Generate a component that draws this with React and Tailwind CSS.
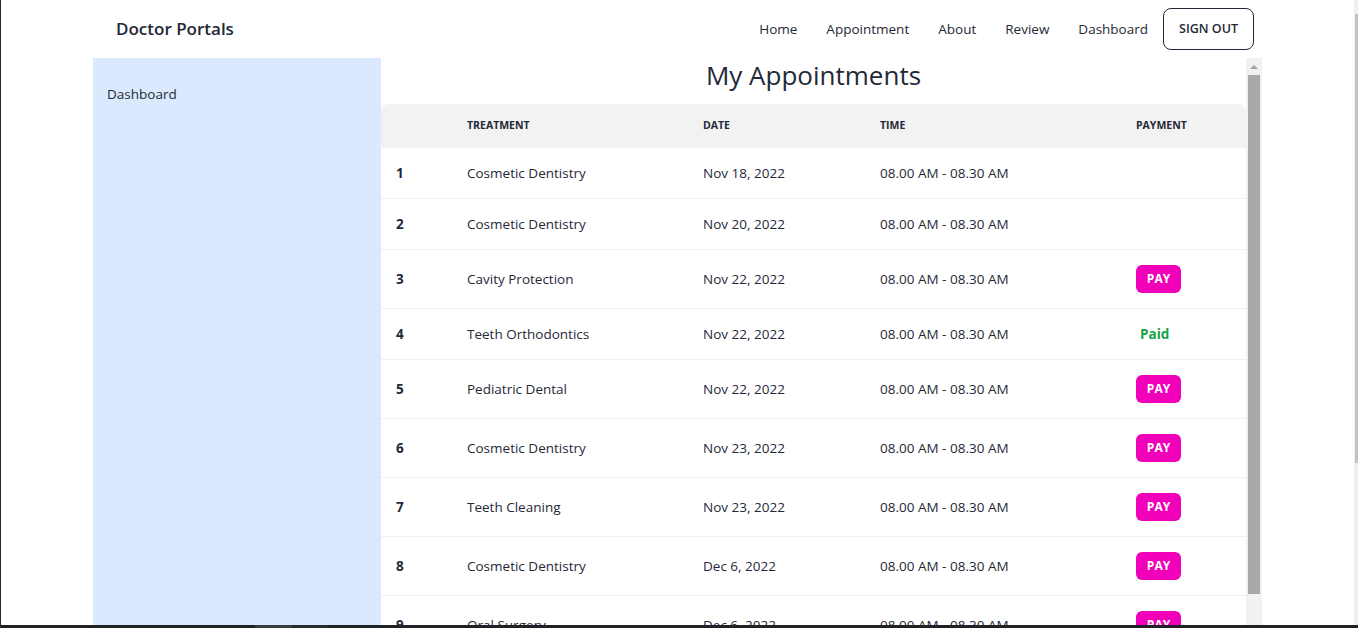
const rows = [
  { id: 1, treatment: 'Cosmetic Dentistry', date: 'Nov 18, 2022', pay: null },
  { id: 2, treatment: 'Cosmetic Dentistry', date: 'Nov 20, 2022', pay: null },
  { id: 3, treatment: 'Cavity Protection', date: 'Nov 22, 2022', pay: 'pay' },
  { id: 4, treatment: 'Teeth Orthodontics', date: 'Nov 22, 2022', pay: 'paid' },
  { id: 5, treatment: 'Pediatric Dental', date: 'Nov 22, 2022', pay: 'pay' },
  { id: 6, treatment: 'Cosmetic Dentistry', date: 'Nov 23, 2022', pay: 'pay' },
  { id: 7, treatment: 'Teeth Cleaning', date: 'Nov 23, 2022', pay: 'pay' },
  { id: 8, treatment: 'Cosmetic Dentistry', date: 'Dec 6, 2022', pay: 'pay' },
  { id: 9, treatment: 'Oral Surgery', date: 'Dec 6, 2022', pay: 'pay' },
];

const navLinks = ['Home', 'Appointment', 'About', 'Review', 'Dashboard'];

function Row({ row }) {
  const tall = row.pay === 'pay';
  return (
    <div
      className={`flex items-center border-b border-[#f0f0f0] text-[13.5px] text-[#1f2937] ${
        tall ? 'h-[59px]' : 'h-[51px]'
      }`}
    >
      <div className="w-[70px] pl-[15px] font-bold">{row.id}</div>
      <div className="w-[236px] pl-[16px]">{row.treatment}</div>
      <div className="w-[177px] pl-[16px]">{row.date}</div>
      <div className="w-[256px] pl-[16px]">08.00 AM - 08.30 AM</div>
      <div className="flex-1 pl-[16px]">
        {row.pay === 'pay' && (
          <button className="h-[28px] w-[45px] rounded-[6px] bg-[#f000b8] text-[12px] font-bold text-white">
            PAY
          </button>
        )}
        {row.pay === 'paid' && (
          <span className="pl-[4px] font-bold text-[#16a34a]">Paid</span>
        )}
      </div>
    </div>
  );
}

export default function App() {
  return (
    <div
      className="flex h-[628px] w-[1358px] flex-col overflow-hidden border-l border-[#2b2b2b] bg-white"
      style={{ fontFamily: '"Open Sans", "Noto Sans", sans-serif' }}
    >
      <div className="flex min-h-0 flex-1">
        <div className="min-w-0 flex-1">
          <div className="mx-auto flex h-full w-[1169px] flex-col">
            {/* navbar */}
            <div className="flex h-[58px] shrink-0 items-center justify-between px-2">
              <div className="pl-[15px] text-[17px] font-semibold text-[#1f2937]">Doctor Portals</div>
              <div className="flex items-center">
                {navLinks.map(l => (
                  <a key={l} className="px-[14.5px] text-[13.5px] text-[#1f2937]">
                    {l}
                  </a>
                ))}
                <button className="ml-[0.5px] h-[42px] rounded-[8px] border border-[#1f2937] px-[15px] text-[12.5px] font-semibold text-[#1f2937]">
                  SIGN OUT
                </button>
              </div>
            </div>

            <div className="flex min-h-0 flex-1">
              {/* sidebar */}
              <div className="w-[288px] shrink-0 bg-[#dbe9fe] px-[14px] pt-[26px]">
                <p className="text-[13.5px] text-[#1f2937]">Dashboard</p>
              </div>

              {/* content */}
              <div className="flex min-w-0 flex-1">
                <div className="w-[865px] overflow-hidden">
                  <h2 className="h-[46px] text-center text-[26px] leading-[34px] text-[#1f2937]">
                    My Appointments
                  </h2>
                  <div className="flex h-[44px] items-center rounded-t-[8px] bg-[#f2f2f2] text-[10.5px] font-bold uppercase text-[#1f2937]">
                    <div className="w-[70px] pl-[15px]"></div>
                    <div className="w-[236px] pl-[16px]">Treatment</div>
                    <div className="w-[177px] pl-[16px]">Date</div>
                    <div className="w-[256px] pl-[16px]">Time</div>
                    <div className="flex-1 pl-[16px]">Payment</div>
                  </div>
                  {rows.map(r => (
                    <Row key={r.id} row={r} />
                  ))}
                </div>
                {/* inner scrollbar */}
                <div className="flex w-[16px] flex-col bg-[#f1f1f1]">
                  <div className="flex h-[17px] items-center justify-center">
                    <div className="h-0 w-0 border-x-[4px] border-b-[4px] border-x-transparent border-b-[#a3a3a3]" />
                  </div>
                  <div className="mx-[2px] h-[519px] bg-[#a8a8a8]" />
                </div>
              </div>
            </div>
          </div>
        </div>
        {/* page scrollbar */}
        <div className="w-[4px] bg-[#f0f0f0] pt-[14px]">
          <div className="ml-[1px] h-[449px] w-[3px] bg-[#c4c4c4]" />
        </div>
      </div>
      <div className="flex h-[3px] bg-[#202124]">
        <div className="w-[254px]" />
        <div className="w-[37px] bg-[#3c3c3c]" />
        <div className="w-[37px] bg-[#2a2a2a]" />
      </div>
    </div>
  );
}
